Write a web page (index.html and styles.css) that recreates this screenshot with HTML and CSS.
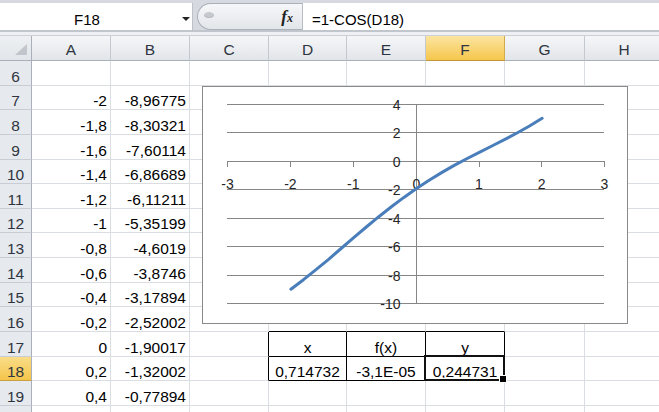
FILE: index.html
```html
<!DOCTYPE html>
<html>
<head>
<meta charset="utf-8">
<link rel="stylesheet" href="styles.css">
</head>
<body>
<div class="fbar">
  <div class="namebox"><span class="nb-text">F18</span><span class="nb-arrow"></span></div>
  <div class="pill"><span class="grip"></span><span class="fx"><span class="fx-f">f</span><span class="fx-x">x</span></span></div>
  <div class="formula">=1-COS(D18)</div>
</div>
<div class="fsep"></div>
<div class="sheet">
  <div class="corner"></div>
  <div class="ch">A</div><div class="ch">B</div><div class="ch">C</div><div class="ch">D</div><div class="ch">E</div><div class="ch on">F</div><div class="ch">G</div><div class="ch">H</div>

  <div class="rh">6</div><div class="c"></div><div class="c"></div><div class="c"></div><div class="c"></div><div class="c"></div><div class="c"></div><div class="c"></div><div class="c"></div>
  <div class="rh">7</div><div class="c">-2</div><div class="c">-8,96775</div><div class="c"></div><div class="c"></div><div class="c"></div><div class="c"></div><div class="c"></div><div class="c"></div>
  <div class="rh">8</div><div class="c">-1,8</div><div class="c">-8,30321</div><div class="c"></div><div class="c"></div><div class="c"></div><div class="c"></div><div class="c"></div><div class="c"></div>
  <div class="rh">9</div><div class="c">-1,6</div><div class="c">-7,60114</div><div class="c"></div><div class="c"></div><div class="c"></div><div class="c"></div><div class="c"></div><div class="c"></div>
  <div class="rh">10</div><div class="c">-1,4</div><div class="c">-6,86689</div><div class="c"></div><div class="c"></div><div class="c"></div><div class="c"></div><div class="c"></div><div class="c"></div>
  <div class="rh">11</div><div class="c">-1,2</div><div class="c">-6,11211</div><div class="c"></div><div class="c"></div><div class="c"></div><div class="c"></div><div class="c"></div><div class="c"></div>
  <div class="rh">12</div><div class="c">-1</div><div class="c">-5,35199</div><div class="c"></div><div class="c"></div><div class="c"></div><div class="c"></div><div class="c"></div><div class="c"></div>
  <div class="rh">13</div><div class="c">-0,8</div><div class="c">-4,6019</div><div class="c"></div><div class="c"></div><div class="c"></div><div class="c"></div><div class="c"></div><div class="c"></div>
  <div class="rh">14</div><div class="c">-0,6</div><div class="c">-3,8746</div><div class="c"></div><div class="c"></div><div class="c"></div><div class="c"></div><div class="c"></div><div class="c"></div>
  <div class="rh">15</div><div class="c">-0,4</div><div class="c">-3,17894</div><div class="c"></div><div class="c"></div><div class="c"></div><div class="c"></div><div class="c"></div><div class="c"></div>
  <div class="rh">16</div><div class="c">-0,2</div><div class="c">-2,52002</div><div class="c"></div><div class="c kb"></div><div class="c kb"></div><div class="c kb"></div><div class="c"></div><div class="c"></div>
  <div class="rh">17</div><div class="c">0</div><div class="c">-1,90017</div><div class="c kr"></div><div class="c ctr kr kb">x</div><div class="c ctr kr kb">f(x)</div><div class="c ctr kr kb">y</div><div class="c"></div><div class="c"></div>
  <div class="rh on">18</div><div class="c">0,2</div><div class="c">-1,32002</div><div class="c kr"></div><div class="c ctr kr kb">0,714732</div><div class="c ctr kr kb">-3,1E-05</div><div class="c ctr kr kb active">0,244731<span class="sel"></span></div><div class="c"></div><div class="c"></div>
  <div class="rh">19</div><div class="c">0,4</div><div class="c">-0,77894</div><div class="c"></div><div class="c"></div><div class="c"></div><div class="c"></div><div class="c"></div><div class="c"></div>
  <div class="rh"></div><div class="c"></div><div class="c"></div><div class="c"></div><div class="c"></div><div class="c"></div><div class="c"></div><div class="c"></div><div class="c"></div>

  <div class="chart">
    <svg width="424" height="236" viewBox="203 87 424 236" xmlns="http://www.w3.org/2000/svg">
      <g stroke="#868686" stroke-width="1" fill="none">
        <line x1="227" y1="104.5" x2="604" y2="104.5"/>
        <line x1="227" y1="132.5" x2="604" y2="132.5"/>
        <line x1="227" y1="161.5" x2="604" y2="161.5"/>
        <line x1="227" y1="189.5" x2="604" y2="189.5"/>
        <line x1="227" y1="218.5" x2="604" y2="218.5"/>
        <line x1="227" y1="246.5" x2="604" y2="246.5"/>
        <line x1="227" y1="275.5" x2="604" y2="275.5"/>
        <line x1="227" y1="303.5" x2="604" y2="303.5"/>
        <line x1="416.5" y1="104" x2="416.5" y2="304"/>
        <line x1="227.5" y1="161" x2="227.5" y2="167"/>
        <line x1="290.5" y1="161" x2="290.5" y2="167"/>
        <line x1="353.5" y1="161" x2="353.5" y2="167"/>
        <line x1="416.5" y1="161" x2="416.5" y2="167"/>
        <line x1="479.5" y1="161" x2="479.5" y2="167"/>
        <line x1="541.5" y1="161" x2="541.5" y2="167"/>
        <line x1="604.5" y1="161" x2="604.5" y2="167"/>
      </g>
      <g class="lbl" text-anchor="end">
        <text x="400.5" y="109.5">4</text>
        <text x="400.5" y="137.5">2</text>
        <text x="400.5" y="166.5">0</text>
        <text x="400.5" y="194.5">-2</text>
        <text x="400.5" y="223.5">-4</text>
        <text x="400.5" y="251.5">-6</text>
        <text x="400.5" y="280.5">-8</text>
        <text x="400.5" y="308.5">-10</text>
      </g>
      <g class="lbl" text-anchor="middle">
        <text x="227.6" y="188.5">-3</text>
        <text x="290.4" y="188.5">-2</text>
        <text x="353.2" y="188.5">-1</text>
        <text x="416.5" y="188.5">0</text>
        <text x="478.8" y="188.5">1</text>
        <text x="541.6" y="188.5">2</text>
        <text x="604.4" y="188.5">3</text>
      </g>
      <polyline fill="none" stroke="#4a7ebb" stroke-width="3" stroke-linejoin="round" stroke-linecap="round"
        points="290.9,289.2 303.5,279.7 316.0,269.7 328.6,259.3 341.1,248.5 353.7,237.7 366.3,227.0 378.8,216.7 391.4,206.8 403.9,197.4 416.5,188.6 429.1,180.3 441.6,172.6 454.2,165.4 466.7,158.7 479.3,152.3 491.9,146.0 504.4,139.7 517.0,133.0 529.5,126.0 542.1,118.3"/>
    </svg>
  </div>
</div>
</body>
</html>
```

FILE: styles.css
```css
* { box-sizing: border-box; }
html, body { margin: 0; padding: 0; }
body {
  width: 659px;
  height: 412px;
  overflow: hidden;
  background: #fff;
  font-family: "Liberation Sans", Arial, sans-serif;
  color: #000;
}

/* formula bar */
.fbar {
  display: flex;
  height: 30px;
  padding-top: 3px;
  background: #d6dae0;
}
.namebox {
  width: 193px;
  background: #fff;
  display: flex;
  align-items: flex-start;
  border-right: 1px solid #bcc2ca;
}
.nb-text {
  width: 174px;
  text-align: center;
  font-size: 15px;
  line-height: 20px;
  padding-top: 7px;
}
.nb-arrow {
  width: 0;
  height: 0;
  margin-left: 8px;
  margin-top: 14px;
  border-left: 4px solid transparent;
  border-right: 4px solid transparent;
  border-top: 4px solid #222;
}
.pill {
  margin-left: 4px;
  width: 105px;
  display: flex;
  align-items: flex-start;
  border: 1px solid #aab1bb;
  border-right: 0;
  border-radius: 14px 0 0 14px;
  background: linear-gradient(#f6f7f9, #e2e5e9);
}
.grip {
  width: 10px;
  height: 6px;
  margin: 8px 0 0 6px;
  border-radius: 50%;
  background: #c6cacf;
  box-shadow: inset 0 -1px 0 #b4b8be;
}
.fx {
  margin-left: auto;
  margin-right: 9px;
  margin-top: 3px;
  font-family: "Liberation Serif", serif;
  font-style: italic;
  font-weight: bold;
  color: #222;
  line-height: 20px;
}
.fx-f { font-size: 17px; }
.fx-x { font-size: 12px; }
.formula {
  flex: 1;
  background: #fff;
  border-left: 1px solid #b7bdc6;
  padding: 7px 0 0 9px;
  font-size: 15px;
  line-height: 20px;
}
.fsep {
  height: 6px;
  background: #eef0f3;
  border-top: 2px solid #c1c6cd;
  border-bottom: 1px solid #cdd1d7;
}

/* sheet */
.sheet {
  position: relative;
  display: grid;
  grid-template-columns: 32px 79px 79px 79px 78px 79px 79px 80px 79px;
  grid-template-rows: 25px repeat(15, 24.643px);
  font-size: 15.5px;
}
.corner {
  position: relative;
  background: linear-gradient(#eef0f3, #e2e5e9);
  border-right: 1px solid #a9b0b9;
  border-bottom: 1px solid #a9b0b9;
}
.corner::after {
  content: "";
  position: absolute;
  right: 4px;
  bottom: 5px;
  width: 0;
  height: 0;
  border-left: 12px solid transparent;
  border-bottom: 11px solid #c2c6cc;
}
.ch {
  background: linear-gradient(#f5f6f8, #e2e5e9);
  border-right: 1px solid #c4c9d0;
  border-bottom: 1px solid #a9b0b9;
  text-align: center;
  color: #2f3540;
  padding-top: 3px;
  line-height: 21px;
}
.ch.on {
  background: linear-gradient(#fbe5a0, #f6c64c);
  border-right-color: #d1aa4c;
  border-bottom-color: #c4963a;
}
.rh {
  display: flex;
  align-items: flex-end;
  justify-content: center;
  background: #e6e9ed;
  border-right: 1px solid #a9b0b9;
  border-bottom: 1px solid #c8cdd3;
  color: #2f3540;
  line-height: 17px;
}
.rh.on {
  background: linear-gradient(#f9dd88, #f5c54b);
  border-bottom-color: #c9a040;
}
.c {
  display: flex;
  align-items: flex-end;
  justify-content: flex-end;
  padding: 0 3px;
  border-right: 1px solid #dadde2;
  border-bottom: 1px solid #dadde2;
  line-height: 17px;
  white-space: nowrap;
}
.c.ctr { justify-content: center; }
.c.kb { border-bottom-color: #000; }
.c.kr { border-right-color: #000; }
.c.active { position: relative; }
.sel {
  position: absolute;
  left: -2px;
  top: -2px;
  right: -1px;
  bottom: -1px;
  border: 2px solid #111;
  box-shadow: inset 0 0 0 1px #fff;
}
.sel::after {
  content: "";
  position: absolute;
  right: -4px;
  bottom: -4px;
  width: 6px;
  height: 6px;
  background: #000;
  border: 1px solid #fff;
}

/* chart */
.chart {
  position: absolute;
  left: 202px;
  top: 50px;
  width: 426px;
  height: 238px;
  border: 1px solid #898989;
  background: #fff;
}
.chart svg { display: block; }
.lbl {
  font-family: "Liberation Sans", Arial, sans-serif;
  font-size: 14px;
  fill: #262626;
}
```
